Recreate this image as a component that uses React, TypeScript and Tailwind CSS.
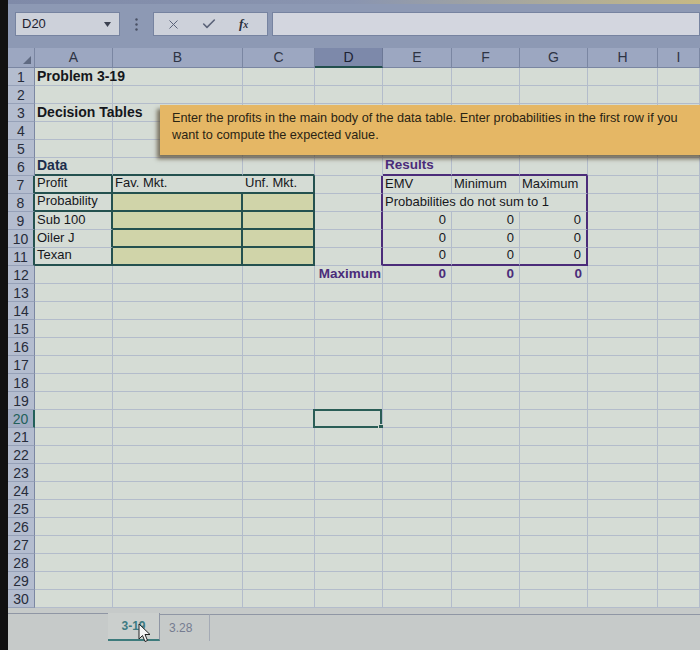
import { Check, X } from "lucide-react";

type Cell = { t?: string; tone?: string; a?: string; bg?: string; br?: string; bb?: string };

const COLS = [
  { id: "A", w: "w-[78px]" },
  { id: "B", w: "w-[130px]" },
  { id: "C", w: "w-[72px]" },
  { id: "D", w: "w-[68px]" },
  { id: "E", w: "w-[69px]" },
  { id: "F", w: "w-[68px]" },
  { id: "G", w: "w-[68px]" },
  { id: "H", w: "w-[70px]" },
  { id: "I", w: "w-[42px]" },
];

const ROWS = Array.from({ length: 30 }, (_, i) => i + 1);

// border pieces — one width + one colour class per side, never mixed
const G_R = "border-r border-r-[#b3bccb]";
const G_B = "border-b border-b-[#b3bccb]";
const T_R = "border-r-2 border-r-[#24514f]";
const T_B = "border-b-2 border-b-[#24514f]";
const P_R = "border-r-2 border-r-[#4b2c7a]";
const P_B = "border-b-2 border-b-[#4b2c7a]";
const NO_R = "border-r-0";
const YEL = "bg-[#d0d4a9]";

const PLAIN = "text-[13px] text-[#15171c]";
const BOLD = "text-[14px] font-bold text-[#15171c]";
const PURPLE = "text-[13.5px] font-bold text-[#4b2c7a]";
const NUM = "justify-end pr-[5px]";

const CELLS: Record<string, Cell> = {
  A1: { t: "Problem 3-19", tone: BOLD },
  A3: { t: "Decision Tables", tone: BOLD },
  A6: { t: "Data", tone: "text-[14px] font-bold text-[#1c2e4c]", bb: T_B },
  B6: { bb: T_B },
  C6: { bb: T_B },
  E6: { t: "Results", tone: PURPLE, bb: P_B },
  F6: { bb: P_B },
  G6: { bb: P_B },

  A7: { t: "Profit", br: T_R, bb: T_B },
  B7: { t: "Fav. Mkt.", br: NO_R, bb: T_B },
  C7: { t: "Unf. Mkt.", br: T_R, bb: T_B },
  D7: { br: P_R },
  E7: { t: "EMV" },
  F7: { t: "Minimum" },
  G7: { t: "Maximum", br: P_R },

  A8: { t: "Probability", br: T_R, bb: T_B },
  B8: { bg: YEL, br: T_R, bb: T_B },
  C8: { bg: YEL, br: T_R, bb: T_B },
  D8: { br: P_R },
  E8: { t: "Probabilities do not sum to 1", br: NO_R },
  F8: { br: NO_R },
  G8: { br: P_R },

  A9: { t: "Sub 100", br: T_R },
  B9: { bg: YEL, br: T_R, bb: T_B },
  C9: { bg: YEL, br: T_R, bb: T_B },
  D9: { br: P_R },
  E9: { t: "0", a: NUM },
  F9: { t: "0", a: NUM },
  G9: { t: "0", a: NUM, br: P_R },

  A10: { t: "Oiler J", br: T_R },
  B10: { bg: YEL, br: T_R, bb: T_B },
  C10: { bg: YEL, br: T_R, bb: T_B },
  D10: { br: P_R },
  E10: { t: "0", a: NUM },
  F10: { t: "0", a: NUM },
  G10: { t: "0", a: NUM, br: P_R },

  A11: { t: "Texan", br: T_R, bb: T_B },
  B11: { bg: YEL, br: T_R, bb: T_B },
  C11: { bg: YEL, br: T_R, bb: T_B },
  D11: { br: P_R },
  E11: { t: "0", a: NUM, bb: P_B },
  F11: { t: "0", a: NUM, bb: P_B },
  G11: { t: "0", a: NUM, br: P_R, bb: P_B },

  D12: { t: "Maximum", tone: PURPLE, a: "justify-end pr-[1px]" },
  E12: { t: "0", tone: PURPLE, a: NUM },
  F12: { t: "0", tone: PURPLE, a: NUM },
  G12: { t: "0", tone: PURPLE, a: NUM },
};

function Toolbar() {
  return (
    <div className="flex h-[48px] shrink-0 flex-col bg-[#8d99b4]">
      <div className="h-[4px] bg-gradient-to-r from-[#7f8aa8] via-[#8a95b0] to-[#c6b985]" />
      <div className="mt-[8px] flex h-[24px] items-stretch">
        <div className="ml-[7px] flex w-[105px] items-center justify-between border border-[#7683a0] bg-[#cdd1da] pl-[6px] pr-[8px] text-[13px] text-[#1d2230]">
          <span>D20</span>
          <svg width="7" height="5" viewBox="0 0 7 5">
            <path d="M0 0h7L3.5 5z" fill="#3b4150" />
          </svg>
        </div>
        <div className="flex w-[33px] items-center justify-center">
          <svg width="3" height="13" viewBox="0 0 3 13">
            <circle cx="1.5" cy="1.5" r="1.2" fill="#4a5165" />
            <circle cx="1.5" cy="6.5" r="1.2" fill="#4a5165" />
            <circle cx="1.5" cy="11.5" r="1.2" fill="#4a5165" />
          </svg>
        </div>
        <div className="flex w-[115px] items-center border border-[#7683a0] bg-[#cdd1da]">
          <X size={15} strokeWidth={1.6} className="ml-[12px] text-[#5b6379]" />
          <Check size={16} strokeWidth={2.4} className="ml-[20px] text-[#5b6379]" />
          <span className="ml-[22px] font-['Liberation_Serif',serif] text-[13px] font-bold italic text-[#2a2f3c]">
            f<span className="text-[10px]">x</span>
          </span>
        </div>
        <div className="ml-[4px] flex-1 border border-[#7683a0] bg-[#d3d6df]" />
      </div>
    </div>
  );
}

function ColumnHeaders() {
  return (
    <div className="flex h-[20px] shrink-0 bg-[#9ca7c1] text-[14px] text-[#2e3444]">
      <div className="flex w-[27px] shrink-0 items-end justify-end border-r border-r-[#7a86a2] border-b border-b-[#7a86a2] pb-[3px] pr-[3px]">
        <svg width="8" height="8" viewBox="0 0 8 8">
          <path d="M8 0v8H0z" fill="#5f6a82" />
        </svg>
      </div>
      {COLS.map((col) =>
        col.id === "D" ? (
          <div
            key={col.id}
            className={`${col.w} flex shrink-0 items-center justify-center border-r border-r-[#6c7896] border-b-2 border-b-[#23504e] bg-[#7d89aa] text-[#1c2233]`}
          >
            {col.id}
          </div>
        ) : (
          <div
            key={col.id}
            className={`${col.w} flex shrink-0 items-center justify-center border-r border-r-[#7a86a2] border-b border-b-[#7a86a2]`}
          >
            {col.id}
          </div>
        )
      )}
    </div>
  );
}

function RowHeader({ r }: { r: number }) {
  if (r === 20) {
    return (
      <div className="flex w-[27px] shrink-0 items-center justify-center border-r-2 border-r-[#23605a] border-b border-b-[#96a1b8] bg-[#a2adc3] text-[#23605a]">
        {r}
      </div>
    );
  }
  const tableRow = r >= 7 && r <= 11;
  return (
    <div
      className={`flex w-[27px] shrink-0 items-center justify-center border-b border-b-[#96a1b8] bg-[#b4bdcf] text-[#272c3a] ${
        tableRow ? "border-r-2 border-r-[#24514f]" : "border-r border-r-[#7b87a2]"
      }`}
    >
      {r}
    </div>
  );
}

function Row({ r }: { r: number }) {
  return (
    <div className="flex h-[18px] shrink-0 text-[14px] leading-[16px]">
      <RowHeader r={r} />
      {COLS.map((col) => {
        const key = `${col.id}${r}`;
        const cell = CELLS[key] ?? {};
        const selected = key === "D20";
        return (
          <div
            key={key}
            className={`${col.w} relative flex shrink-0 items-end whitespace-nowrap pb-[1px] ${cell.a ?? "px-[2px]"} ${
              cell.tone ?? PLAIN
            } ${cell.bg ?? "bg-[#d5dcd5]"} ${cell.br ?? G_R} ${cell.bb ?? G_B}`}
          >
            {cell.t && <span className="relative z-10">{cell.t}</span>}
            {selected && (
              <div className="absolute -left-[2px] -top-[1px] h-[19px] w-[69px] border-2 border-[#2a5d56]">
                <div className="absolute -bottom-[4px] -right-[4px] h-[6px] w-[6px] border border-[#d5dcd5] bg-[#2a5d56]" />
              </div>
            )}
          </div>
        );
      })}
    </div>
  );
}

function SheetTabs() {
  return (
    <div className="flex flex-1 flex-col bg-[#c6cac9] pt-[5px] text-[12px]">
      <div className="flex h-[28px]">
        <div className="w-[100px] border-t border-t-[#8f96a4]" />
        <div className="flex w-[52px] items-center justify-center border-r border-r-[#8f96a4] border-b-2 border-b-[#3d7b7c] bg-[#cbcfcd] font-bold text-[#3d7b82]">
          3-19
        </div>
        <div className="mt-[1px] flex w-[50px] items-center border-t border-t-[#8f96a4] border-r border-r-[#a4aab5] pl-[9px] text-[#757c90]">
          3.28
        </div>
        <div className="mt-[1px] flex-1 border-t border-t-[#8f96a4]" />
      </div>
    </div>
  );
}

function Comment() {
  return (
    <div className="absolute left-[160px] top-[105px] h-[50px] w-[560px] bg-[#e5b765] pl-[12px] pt-[5px] text-[12.7px] leading-[17px] text-[#2a2414] shadow-[-3px_4px_4px_rgba(70,55,30,0.65)]">
      <div className="whitespace-nowrap">
        Enter the profits in the main body of the data table. Enter probabilities in the first row if you
      </div>
      <div className="whitespace-nowrap">want to compute the expected value.</div>
    </div>
  );
}

function Cursor() {
  return (
    <svg className="absolute left-[138px] top-[623px]" width="13" height="20" viewBox="0 0 13 20">
      <path d="M1 1v15l3.5-3.5 2.5 6 2.5-1-2.5-6H12z" fill="#f4f4f4" stroke="#222" strokeWidth="1" strokeLinejoin="round" />
    </svg>
  );
}

export default function App() {
  return (
    <div className="relative flex h-[650px] w-[700px] overflow-hidden bg-[#111] font-['Liberation_Sans',Arial,sans-serif]">
      <div className="w-[8px] shrink-0 bg-[#111]" />
      <div className="flex min-w-0 flex-1 flex-col">
        <Toolbar />
        <ColumnHeaders />
        {ROWS.map((r) => (
          <Row key={r} r={r} />
        ))}
        <SheetTabs />
      </div>
      <Comment />
      <Cursor />
    </div>
  );
}
